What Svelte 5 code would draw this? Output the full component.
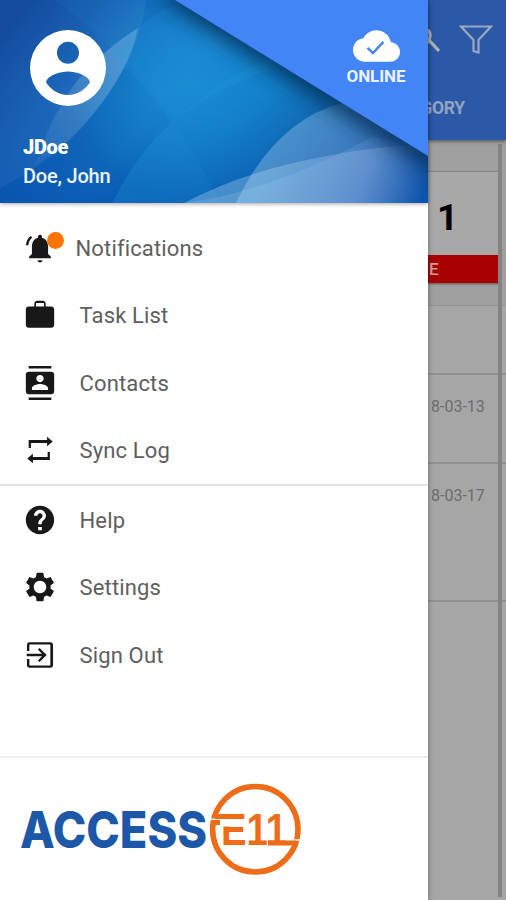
<script>
  const groups = [
    [
      { label: 'Notifications', icon: 'bell', badge: true },
      { label: 'Task List', icon: 'work' },
      { label: 'Contacts', icon: 'contacts' },
      { label: 'Sync Log', icon: 'sync' }
    ],
    [
      { label: 'Help', icon: 'help' },
      { label: 'Settings', icon: 'settings' },
      { label: 'Sign Out', icon: 'exit' }
    ]
  ];
  const paths = {
    bell: 'M6.6 4.600 5.300 3.500C3.400 5 2.300 7.200 2.100 10h1.700c.2-2.300 1.200-4.100 2.800-5.400zM17.700 11c0-3.070-1.500-5.640-4.300-6.320V4.100c0-.83-.6-1.400-1.400-1.400s-1.400.57-1.400 1.400v.58C7.830 5.360 6.300 7.920 6.300 11v5.200l-2 2v1h15.400v-1l-2-2V11zm-5.700 11.200c.9 0 1.700-.7 1.700-1.600h-3.400c0 .9.8 1.600 1.700 1.600z',
    work: 'M20 6h-4V4c0-1.11-.89-2-2-2h-4c-1.11 0-2 .89-2 2v2H4c-1.11 0-1.99.89-1.99 2L2 19c0 1.11.89 2 2 2h16c1.11 0 2-.89 2-2V8c0-1.11-.89-2-2-2zm-5.200 0H9.200V3.500h5.600z',
    contacts: 'M20 0H4v1.800h16V0zM4 24h16v-1.800H4V24zM20 4H4c-1.1 0-2 .9-2 2v12c0 1.1.9 2 2 2h16c1.1 0 2-.9 2-2V6c0-1.1-.9-2-2-2zm-8 2.400c1.500 0 2.600 1.100 2.600 2.500s-1.100 2.500-2.600 2.500-2.600-1.100-2.600-2.500S10.500 6.400 12 6.400zM17.700 17H6.300v-1.300c0-1.900 3.600-3 5.700-3s5.700 1.100 5.700 3z',
    sync: 'M5 5h12V2.6l4 3.4-4 3.4V7H5.600v3.600H4V5zM19 19H7v2.4L3 18l4-3.4V17h10.4v-3.6H19V19z',
    help: 'M12 2C6.48 2 2 6.48 2 12s4.48 10 10 10 10-4.48 10-10S17.52 2 12 2zm1.300 17.200h-2.600v-2.300h2.600zm2.07-7.950-.9.92C13.650 12.900 13.200 13.500 13.200 15h-2.400v-.5c0-1.100.45-2.100 1.170-2.830l1.240-1.260c.37-.36.59-.86.59-1.410 0-1-.8-1.800-1.800-1.800s-1.800.8-1.800 1.800H7.800c0-2.310 1.890-4.200 4.200-4.200s4.200 1.890 4.200 4.200c0 .88-.36 1.680-.83 2.250z',
    settings: 'M19.43 12.98c.04-.32.07-.64.07-.98s-.03-.66-.07-.98l2.11-1.65c.19-.15.24-.42.12-.64l-2-3.46c-.12-.22-.39-.3-.61-.22l-2.49 1c-.52-.4-1.08-.73-1.69-.98l-.38-2.65C14.46 2.18 14.25 2 14 2h-4c-.25 0-.46.18-.49.42l-.38 2.65c-.61.25-1.17.59-1.69.98l-2.49-1c-.23-.09-.49 0-.61.22l-2 3.46c-.13.22-.07.49.12.64l2.11 1.65c-.04.32-.07.65-.07.98s.03.66.07.98l-2.11 1.65c-.19.15-.24.42-.12.64l2 3.46c.12.22.39.3.61.22l2.49-1c.52.4 1.08.73 1.69.98l.38 2.65c.03.24.24.42.49.42h4c.25 0 .46-.18.49-.42l.38-2.65c.61-.25 1.17-.59 1.69-.98l2.49 1c.23.09.49 0 .61-.22l2-3.46c.12-.22.07-.49-.12-.64l-2.11-1.65zM12 16.400c-2.430 0-4.400-1.970-4.400-4.400s1.970-4.400 4.400-4.400 4.400 1.970 4.400 4.400-1.970 4.400-4.400 4.400z',
    exit: 'M10.5 15.8 11.7 17l5-5-5-5-1.2 1.2 2.9 2.9H2.6v1.8h10.8l-2.9 2.9zM19.4 3H4.6C3.6 3 2.8 3.8 2.8 4.8v4.400h1.700V4.600h14.800v14.800H4.500v-4.600H2.800v4.400c0 1 .8 1.800 1.800 1.800h14.800c1 0 1.800-.8 1.800-1.800V4.800c0-1-.8-1.800-1.800-1.800z'
  };
</script>

<div class="screen">
  <aside class="drawer">
    <header>
      <svg class="backdrop" viewBox="0 0 428 203" preserveAspectRatio="none" aria-hidden="true">
        <defs>
          <linearGradient id="sea" x1="0" y1="0.2" x2="1" y2="0.6">
            <stop offset="0" stop-color="#07439b" />
            <stop offset=".22" stop-color="#0f60b5" />
            <stop offset=".43" stop-color="#147bc6" />
            <stop offset=".62" stop-color="#0a76c2" />
            <stop offset=".8" stop-color="#1262ac" />
            <stop offset="1" stop-color="#0b439b" />
          </linearGradient>
          <radialGradient id="glow" gradientUnits="userSpaceOnUse" cx="188" cy="82" r="115">
            <stop offset="0" stop-color="#188bd2" stop-opacity=".8" />
            <stop offset="1" stop-color="#188bd2" stop-opacity="0" />
          </radialGradient>
          <linearGradient id="base" x1="0" y1="0" x2="0" y2="1">
            <stop offset=".45" stop-color="#0447a8" stop-opacity="0" />
            <stop offset="1" stop-color="#0447a8" stop-opacity=".6" />
          </linearGradient>
          <linearGradient id="ray" gradientUnits="userSpaceOnUse" x1="130" y1="30" x2="35" y2="180">
            <stop offset="0" stop-color="#fff" stop-opacity=".24" />
            <stop offset="1" stop-color="#fff" stop-opacity=".02" />
          </linearGradient>
          <linearGradient id="wave" gradientUnits="userSpaceOnUse" x1="280" y1="130" x2="428" y2="180">
            <stop offset="0" stop-color="#b4dcf5" stop-opacity=".34" />
            <stop offset=".6" stop-color="#b4cdf0" stop-opacity=".24" />
            <stop offset="1" stop-color="#b4cdf0" stop-opacity="0" />
          </linearGradient>
          <filter id="soft" x="-20%" y="-20%" width="140%" height="140%">
            <feGaussianBlur stdDeviation="11" />
          </filter>
        </defs>
        <rect width="428" height="203" fill="url(#sea)" />
        <rect width="428" height="203" fill="url(#base)" />
        <rect width="428" height="203" fill="url(#glow)" />
        <path d="M0 0H146Q140 58 94 113Q62 157 0 188Z" fill="#fff" opacity=".055" />
        <path d="M138 28Q130 68 94 113Q70 143 35 166Q55 102 90 66Q114 43 138 28Z" fill="url(#ray)" />
        <path d="M55 0Q160 77 220 203H112Q145 135 195 107Q250 63 300 52L176 0Z" fill="#2298df" opacity=".12" />
        <path d="M138 28Q160 10 181 2L300 48V60Q220 83 171 124Q148 86 109 54Z" fill="#28a0df" opacity=".16" />
        <path d="M112 203Q145 138 190 108Q225 76 270 59L428 150V203Z" fill="#2ba8e2" opacity=".14" />
        <path d="M236 203Q275 121 342 103L428 145V203Z" fill="url(#wave)" />
        <path d="M184 203Q245 171 322 157Q385 144 428 146V203Z" fill="url(#wave)" />
        <path d="M184 203Q270 192 372 137L428 146V203Z" fill="url(#wave)" opacity=".5" />
        <path d="M168 -2L435 167V148L190 -12Z" fill="#00264d" stroke="#00264d" stroke-width="9" opacity=".85" filter="url(#soft)" />
        <path d="M175 0H428V156Z" fill="#4385f7" />
      </svg>
      <div class="profile">
        <svg class="avatar" viewBox="2 2 20 20" aria-hidden="true">
          <path fill="#fff" fill-rule="evenodd" d="M12 2a10 10 0 1 0 0 20 10 10 0 0 0 0-20zm0 3.1c1.6 0 2.9 1.3 2.9 2.9s-1.3 2.9-2.9 2.9S9.1 9.6 9.1 8 10.4 5.1 12 5.1zm0 14c-2.5 0-4.7-1.5-5.8-3.4.4-1.8 3.8-2.8 5.8-2.8 2 0 5.4 1 5.8 2.8-1.1 1.9-3.3 3.4-5.8 3.4z" />
        </svg>
        <strong>JDoe</strong>
        <span>Doe, John</span>
      </div>
      <div class="status">
        <svg viewBox="0 4 24 16" aria-hidden="true">
          <path fill="#fff" d="M19.35 10.04C18.67 6.59 15.64 4 12 4 9.11 4 6.6 5.64 5.35 8.04 2.34 8.36 0 10.91 0 14c0 3.31 2.69 6 6 6h13c2.76 0 5-2.24 5-5 0-2.64-2.05-4.78-4.65-4.96z" />
          <path fill="none" stroke="#4385f7" stroke-width="1.25" d="m7.4 13 2.8 2.6 5.3-5.7" />
        </svg>
        <span>ONLINE</span>
      </div>
    </header>

    <nav>
      {#each groups as group}
        <ul>
          {#each group as item}
            <li class:badged={item.badge}>
              <span class="icon">
                <svg viewBox="0 0 24 24" aria-hidden="true"><path d={paths[item.icon]} /></svg>
                {#if item.badge}<i></i>{/if}
              </span>
              <span class="label">{item.label}</span>
            </li>
          {/each}
        </ul>
      {/each}
    </nav>

    <footer>
      <svg viewBox="20 780 290 100" role="img" aria-label="Access E11">
        <text class="access" x="20" y="848" textLength="187" lengthAdjust="spacingAndGlyphs">ACCESS</text>
        <circle cx="255.300" cy="829.300" r="42.700" fill="none" stroke="#ee6b17" stroke-width="5.500" />
        <path fill="none" stroke="#fff" stroke-width="1.600" d="M208 819.400H222M290 840H303" />
        <text class="eleven" x="221" y="845" textLength="66" lengthAdjust="spacingAndGlyphs">E11</text>
        <path fill="#fff" d="M220 819h10v7.500h-10z" />
        <path fill="none" stroke="#ee6b17" stroke-width="5" d="M243 816.400H215M268 843H296M211 822.500H220" />
      </svg>
    </footer>
  </aside>

  <main>
    <div class="bar">
      <div class="tools">
        <svg class="search" viewBox="0 0 12 24" aria-hidden="true"><path d="M-1 0Q4 4 1 11L11 22M-1 13H2" /></svg>
        <svg class="filter" viewBox="0 0 34 30" aria-hidden="true"><path d="M2 2.500H32L19.500 16V28.500L14.500 27V16Z" /></svg>
      </div>
      <div class="tab"><span>GORY</span></div>
    </div>
    <div class="content">
      <div class="rows">
        <div class="summary">
          <div class="card">
            <b>1</b>
            <em>E</em>
          </div>
        </div>
        <div class="row blank"></div>
        <div class="row first">8-03-13</div>
        <div class="row second">8-03-17</div>
      </div>
      <div class="scroll"></div>
    </div>
  </main>
</div>

<style>
  :global(body) { margin: 0; }
  .screen { display: flex; width: 506px; height: 900px; overflow: hidden; font-family: Roboto, sans-serif; background: #a6a6a6; }
  .drawer { display: flex; flex-direction: column; width: 428px; flex: none; background: #fff; z-index: 2; box-shadow: 0 0 5px rgba(0, 0, 0, .4); }
  header { position: relative; display: flex; justify-content: space-between; height: 203px; box-shadow: 0 1px 4px rgba(0, 0, 0, .35); }
  .backdrop { position: absolute; inset: 0; width: 428px; height: 203px; overflow: hidden; }
  .profile { position: relative; display: flex; flex-direction: column; padding: 30px 0 0 23px; color: #fff; }
  .avatar { width: 76px; height: 76px; margin-left: 7px; }
  .profile strong { margin-top: 27px; font-size: 20px; line-height: 28px; font-weight: 900; letter-spacing: -.3px; }
  .profile span { margin-top: 1px; font-size: 20px; line-height: 28px; font-weight: 500; letter-spacing: -.2px; color: #edf5ff; }
  .status { position: relative; display: flex; flex-direction: column; align-items: center; width: 104px; padding-top: 30px; color: #fff; }
  .status svg { width: 47px; height: 32px; }
  .status span { margin-top: 3px; font-size: 17px; line-height: 22px; font-weight: 700; letter-spacing: -.1px; color: #edf3ff; }
  nav { flex: 1; padding-top: 11px; }
  ul { margin: 0; padding: 0; list-style: none; }
  ul + ul { border-top: 2px solid #e4e4e4; }
  li { display: flex; align-items: center; height: 67.5px; padding-left: 23px; }
  .icon { position: relative; display: flex; width: 56.5px; }
  .badged .icon { width: 52.5px; }
  .icon svg { width: 34px; height: 34px; fill: #181818; }
  .icon i { position: absolute; left: 24px; top: 1px; width: 17px; height: 17px; border-radius: 50%; background: #ff7300; }
  .label { font-size: 22px; letter-spacing: .15px; color: #5e5e5e; padding-top: 1px; }
  footer { height: 144px; border-top: 2px solid #eee; box-sizing: border-box; padding: 22px 0 0 20px; }
  footer svg { display: block; width: 290px; height: 100px; overflow: visible; }
  .access { font: 800 51px Inter, sans-serif; fill: #1d57a8; }
  .eleven { font: 700 44.500px "Liberation Sans", sans-serif; fill: #ee6b17; }
  main { display: flex; flex-direction: column; width: 78px; }
  .bar { height: 140px; background: #2b59a8; box-shadow: 0 1px 4px rgba(0, 0, 0, .55); z-index: 1; }
  .tools { display: flex; height: 78px; }
  .search { width: 12px; height: 24px; margin-top: 29px; fill: none; stroke: #b0b3b6; stroke-width: 3; }
  .filter { width: 34px; height: 30px; margin: 24px 0 0 19px; fill: none; stroke: #9ba7bf; stroke-width: 2.200; }
  .tab { display: flex; justify-content: flex-end; align-items: center; height: 60px; padding-right: 41px; }
  .tab span { font-size: 17.5px; font-weight: 700; letter-spacing: -.2px; color: #93a3c0; }
  .content { display: flex; flex: 1; position: relative; }
  .rows { flex: 1; }
  .summary { height: 166px; box-sizing: border-box; padding-top: 31px; background: #9f9f9f; border-bottom: 1px solid #959595; }
  .card { display: flex; flex-direction: column; width: 71px; height: 112px; background: #a8a8a8; border-top: 1px solid #888; box-sizing: border-box; box-shadow: 0 1px 2px rgba(0, 0, 0, .45); }
  .card b { height: 83px; padding: 4px 0 0 9px; box-sizing: border-box; font-size: 37px; line-height: 84px; color: #000; }
  .card em { flex: 1; padding-left: 1px; background: #a80000; color: #cfa0a0; font-style: normal; font-weight: 500; font-size: 17px; line-height: 28px; }
  .row { box-sizing: border-box; border-bottom: 2px solid #909090; padding: 22px 0 0 3px; font-size: 16px; line-height: 20px; color: #6d6d6d; }
  .blank { height: 69px; }
  .first { height: 89px; }
  .second { height: 138px; }
  .scroll { position: absolute; left: 70px; top: 4px; bottom: 3px; width: 4px; background: #838383; }
</style>
